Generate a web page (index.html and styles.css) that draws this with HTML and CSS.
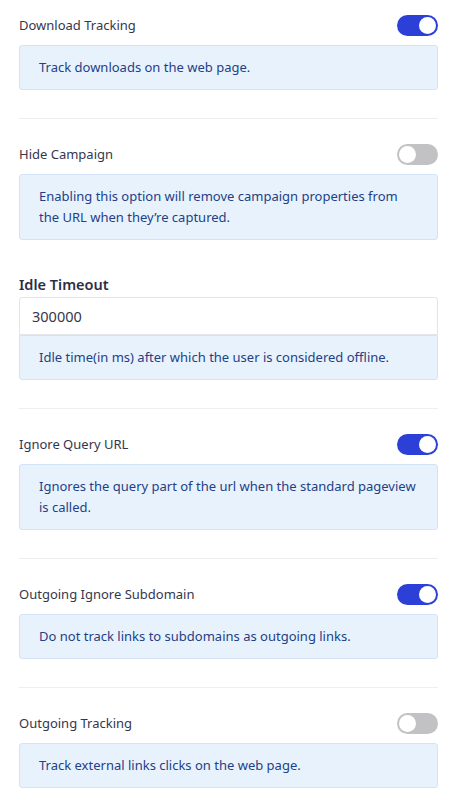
FILE: index.html
```html
<!DOCTYPE html>
<html>
<head>
<meta charset="utf-8">
<link rel="stylesheet" href="styles.css">
</head>
<body>
<main class="settings">
  <section class="setting first divided">
    <div class="row">
      <span class="label">Download Tracking</span>
      <span class="toggle on"><span class="knob"></span></span>
    </div>
    <div class="help">Track downloads on the web page.</div>
  </section>

  <section class="setting">
    <div class="row">
      <span class="label">Hide Campaign</span>
      <span class="toggle"><span class="knob"></span></span>
    </div>
    <div class="help">Enabling this option will remove campaign properties from the URL when they’re captured.</div>
  </section>

  <section class="setting field divided">
    <label class="field-label" for="idle">Idle Timeout</label>
    <input id="idle" class="input" type="text" value="300000">
    <div class="help attached">Idle time(in ms) after which the user is considered offline.</div>
  </section>

  <section class="setting divided">
    <div class="row">
      <span class="label">Ignore Query URL</span>
      <span class="toggle on"><span class="knob"></span></span>
    </div>
    <div class="help">Ignores the query part of the url when the standard pageview is called.</div>
  </section>

  <section class="setting divided">
    <div class="row">
      <span class="label">Outgoing Ignore Subdomain</span>
      <span class="toggle on"><span class="knob"></span></span>
    </div>
    <div class="help">Do not track links to subdomains as outgoing links.</div>
  </section>

  <section class="setting">
    <div class="row">
      <span class="label">Outgoing Tracking</span>
      <span class="toggle"><span class="knob"></span></span>
    </div>
    <div class="help">Track external links clicks on the web page.</div>
  </section>
</main>
</body>
</html>
```

FILE: styles.css
```css
* { box-sizing: border-box; }

html, body {
  margin: 0;
  padding: 0;
  background: #ffffff;
}

body {
  font-family: "Noto Sans", "Open Sans", sans-serif;
  color: #34364c;
}

.settings {
  padding: 0 22px 0 19px;
}

.setting {
  padding-top: 25px;
  padding-bottom: 28px;
}

.setting.first {
  padding-top: 15px;
}

.setting.divided {
  border-bottom: 1px solid #eceef2;
}

.setting.field {
  padding-top: 5px;
}

.row {
  display: flex;
  align-items: center;
  justify-content: space-between;
  height: 21px;
  margin-bottom: 9px;
}

.label {
  font-size: 13px;
  line-height: 21px;
  color: #35374d;
}

.toggle {
  position: relative;
  display: inline-block;
  width: 41px;
  height: 21px;
  border-radius: 11px;
  background: #c2c2c4;
}

.toggle.on {
  background: #2c40d8;
}

.toggle .knob {
  position: absolute;
  top: 2px;
  left: 2px;
  width: 17px;
  height: 17px;
  border-radius: 50%;
  background: #ffffff;
}

.toggle.on .knob {
  left: 22px;
}

.help {
  background: #e8f2fd;
  border: 1px solid #d3e4f9;
  border-radius: 3px;
  padding: 11px 19px;
  font-size: 13px;
  line-height: 21px;
  color: #233f86;
}

.field-label {
  display: block;
  font-size: 14.5px;
  font-weight: 600;
  line-height: 22px;
  margin-bottom: 2px;
  color: #2b2e45;
}

.input {
  display: block;
  width: 100%;
  height: 38px;
  margin: 0;
  padding: 0 12px;
  border: 1px solid #e3e5ea;
  border-radius: 3px 3px 0 0;
  font-family: "Noto Sans", "Open Sans", sans-serif;
  font-size: 14.5px;
  color: #34364c;
  background: #ffffff;
  outline: none;
}

.help.attached {
  border-radius: 0 0 3px 3px;
}
```
